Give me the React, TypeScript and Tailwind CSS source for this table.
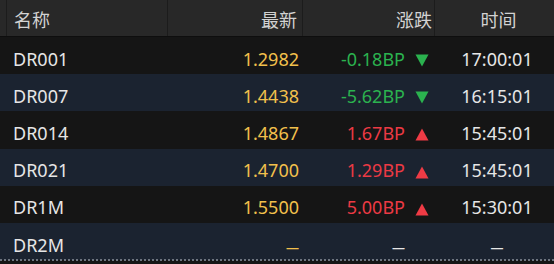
import React from "react";

type Row = {
  name: string;
  price: string;
  change: string;
  dir: "up" | "down" | "none";
  time: string;
};

const rows: Row[] = [
  { name: "DR001", price: "1.2982", change: "-0.18BP", dir: "down", time: "17:00:01" },
  { name: "DR007", price: "1.4438", change: "-5.62BP", dir: "down", time: "16:15:01" },
  { name: "DR014", price: "1.4867", change: "1.67BP", dir: "up", time: "15:45:01" },
  { name: "DR021", price: "1.4700", change: "1.29BP", dir: "up", time: "15:45:01" },
  { name: "DR1M", price: "1.5500", change: "5.00BP", dir: "up", time: "15:30:01" },
  { name: "DR2M", price: "—", change: "—", dir: "none", time: "—" },
];

function Tri({ dir }: { dir: "up" | "down" }) {
  return (
    <svg width="14" height="13" viewBox="0 0 14 13">
      {dir === "up" ? (
        <polygon points="7,0.5 13.5,12.5 0.5,12.5" fill="#ef3b45" />
      ) : (
        <polygon points="0.5,0.5 13.5,0.5 7,12.5" fill="#2bb24f" />
      )}
    </svg>
  );
}

export default function App() {
  return (
    <div
      className="w-[554px] h-[264px] overflow-hidden bg-[#151515] text-[18px] leading-none"
      style={{ fontFamily: '"Noto Sans", "Noto Sans CJK SC", sans-serif' }}
    >
      <div className="grid grid-cols-[167px_135px_132px_120px] h-[37px] bg-[#282828] border-b border-[#0e0e0e] text-[#d2d2d2]">
        <div className="flex items-center pt-[4px] border-l border-[#1c1c1c] ml-[6px] pl-[7px]">名称</div>
        <div className="flex items-center pt-[4px] justify-end pr-[5px] border-l border-[#1c1c1c]">最新</div>
        <div className="flex items-center pt-[4px] justify-end pr-[2px] border-l border-[#1c1c1c]">涨跌</div>
        <div className="flex items-center pt-[4px] justify-center pl-[8px] border-l border-[#1c1c1c]">时间</div>
      </div>
      {rows.map((r, i) => (
        <div
          key={r.name}
          className={`grid grid-cols-[167px_135px_132px_120px] h-[37.2px] ${
            i % 2 === 0 ? "bg-[#151515]" : "bg-[#1b2330]"
          }`}
        >
          <div className="flex items-center pt-[6px] pl-[13px] text-[#e6e6e6]">{r.name}</div>
          <div className="flex items-center pt-[6px] justify-end pr-[3px] text-[#f2c04c]">
            {r.dir === "none" ? <span className="relative top-[3px] text-[13px] font-bold">—</span> : r.price}
          </div>
          <div
            className={`flex items-center pt-[6px] justify-end ${
              r.dir === "down" ? "text-[#2bb24f]" : r.dir === "up" ? "text-[#ec3a44]" : "text-[#e6e6e6]"
            }`}
          >
            {r.dir === "none" ? <span className="relative top-[3px] text-[13px] font-bold">—</span> : r.change}
            <span className="w-[29px] flex items-center justify-end pr-[5px] relative top-[2px]">
              {r.dir !== "none" && <Tri dir={r.dir} />}
            </span>
          </div>
          <div className="flex items-center pt-[6px] justify-center pl-[6px] text-[#e6e6e6]">
            {r.dir === "none" ? <span className="relative top-[3px] text-[13px] font-bold">—</span> : r.time}
          </div>
        </div>
      ))}
      <div className="border-t-2 border-dotted border-[#6e7580] mt-[-1px]" />
    </div>
  );
}
